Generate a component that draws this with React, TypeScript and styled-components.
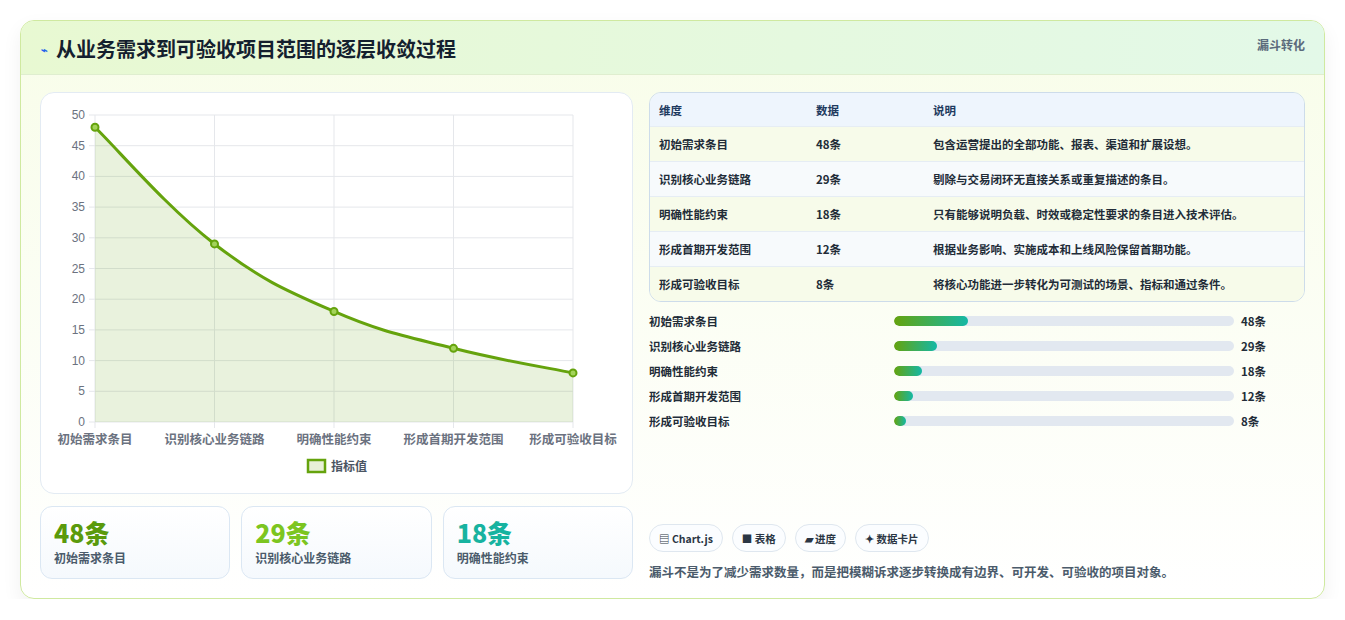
import React from "react";
import styled, { createGlobalStyle } from "styled-components";

const G = createGlobalStyle`
  body { margin: 0; background: #fff; font-family: "Noto Sans CJK SC", "Noto Sans", sans-serif; }
`;
const Page = styled.div` padding: 20px 20px 0 20px; `;
const Card = styled.div`
  border: 1px solid #cfe9a0; border-radius: 14px; overflow: hidden; height: 579px; box-sizing: border-box;
  background: linear-gradient(180deg, #f8fde9 0%, #ffffff 100%);
  box-shadow: 0 8px 20px rgba(0,0,0,0.06);
`;
const Header = styled.div`
  height: 54px; display: flex; justify-content: space-between; align-items: flex-start; padding: 0 19px 0 20px;
  background: linear-gradient(90deg, #e8f9d2, #e3f9e8); border-bottom: 1px solid #dfeecf; box-sizing: border-box;
`;
const Title = styled.h1`
  margin: 13px 0 0; font-size: 20px; font-weight: 700; color: #14202e; display: flex; align-items: center; gap: 8px;
`;
const Tag = styled.span` margin-top: 15px; font-size: 12px; font-weight: 700; color: #5b6b7c; `;
const Body = styled.div`
  display: grid; grid-template-columns: 593px 656px; gap: 16px; padding: 17px 18px 0 19px;
`;
const Left = styled.div` display: flex; flex-direction: column; gap: 12px; `;
const ChartCard = styled.div`
  height: 402px; border: 1px solid #e3ebf3; border-radius: 14px; background: #fff; box-sizing: border-box;
`;
const Stats = styled.div` display: grid; grid-template-columns: repeat(3, 1fr); gap: 11px; `;
const Stat = styled.div`
  height: 73px; border: 1px solid #dbe7f3; border-radius: 12px; padding: 10px 13px; box-sizing: border-box;
  background: linear-gradient(180deg, #fff, #f5f9fd);
`;
const StatNum = styled.div<{ c: string }>` font-size: 25px; font-weight: 800; color: ${p => p.c}; line-height: 30px; `;
const StatLbl = styled.div` font-size: 12px; color: #4b5b6b; font-weight: 600; margin-top: 2px; `;
const Right = styled.div` display: flex; flex-direction: column; `;
const Table = styled.div` border: 1px solid #cddcea; border-radius: 12px; overflow: hidden; height: 208px; `;
const Row = styled.div<{ bg: string; head?: boolean }>`
  display: grid; grid-template-columns: 157px 117px 1fr; padding-left: 9px; height: ${p => p.head ? 33 : 35}px;
  align-items: center; background: ${p => p.bg}; font-size: 11.5px; font-weight: ${p => p.head ? 700 : 600};
  color: ${p => p.head ? "#1e3a5f" : "#222c38"}; border-top: ${p => p.head ? "none" : "1px solid #e6edf4"};
  box-sizing: border-box;
`;
const Bars = styled.div` display: flex; flex-direction: column; gap: 7px; margin-top: 10px; `;
const BarRow = styled.div`
  display: grid; grid-template-columns: 238px 340px 1fr; column-gap: 7px; align-items: center; height: 18px;
  font-size: 11.5px; font-weight: 600; color: #222c38;
`;
const Track = styled.div` height: 10px; border-radius: 5px; background: #e2e8f0; overflow: hidden; `;
const Fill = styled.div` height: 100%; border-radius: 5px; background: linear-gradient(90deg, #65a30d, #14b8a6); `;
const Chips = styled.div` display: flex; gap: 9px; margin-top: 94px; `;
const Chip = styled.span`
  height: 28px; padding: 0 9px; border: 1px solid #dfe7ef; border-radius: 14px; display: inline-flex; align-items: center;
  font-size: 10.5px; font-weight: 700; color: #2b3644; background: #fbfdff; box-sizing: border-box;
`;
const Foot = styled.p` margin: 10px 0 0; font-size: 12.5px; color: #4b5b6b; font-weight: 600; `;

const labels = ["初始需求条目", "识别核心业务链路", "明确性能约束", "形成首期开发范围", "形成可验收目标"];
const vals = [48, 29, 18, 12, 8];
const descs = [
  "包含运营提出的全部功能、报表、渠道和扩展设想。",
  "剔除与交易闭环无直接关系或重复描述的条目。",
  "只有能够说明负载、时效或稳定性要求的条目进入技术评估。",
  "根据业务影响、实施成本和上线风险保留首期功能。",
  "将核心功能进一步转化为可测试的场景、指标和通过条件。",
];
const widths = [21.7, 12.6, 8.2, 5.6, 3.5];

function Chart() {
  const x0 = 54, x1 = 532, y0 = 22, y1 = 329;
  const xs = labels.map((_, i) => x0 + (i * (x1 - x0)) / 4);
  const y = (v: number) => y1 - (v / 50) * (y1 - y0);
  const pts = vals.map((v, i) => [xs[i], y(v)]);
  let d = `M${pts[0][0]},${pts[0][1]}`;
  for (let i = 0; i < pts.length - 1; i++) {
    const p0 = pts[Math.max(0, i - 1)], p1 = pts[i], p2 = pts[i + 1], p3 = pts[Math.min(pts.length - 1, i + 2)];
    const t = 0.2;
    d += ` C${p1[0] + (p2[0] - p0[0]) * t},${p1[1] + (p2[1] - p0[1]) * t} ${p2[0] - (p3[0] - p1[0]) * t},${p2[1] - (p3[1] - p1[1]) * t} ${p2[0]},${p2[1]}`;
  }
  return (
    <svg width="593" height="402" viewBox="0 0 593 402" style={{ display: "block" }}>
      {Array.from({ length: 11 }, (_, i) => (
        <g key={i}>
          <line x1={x0 - 6} x2={x1} y1={y(i * 5)} y2={y(i * 5)} stroke="#e5e7eb" />
          <text x={x0 - 10} y={y(i * 5) + 4} textAnchor="end" fontSize="12" fill="#6b7280" fontFamily="Liberation Sans, sans-serif">{i * 5}</text>
        </g>
      ))}
      {xs.map((x, i) => (
        <g key={i}>
          <line x1={x} x2={x} y1={y0} y2={y1 + 6} stroke="#e5e7eb" />
          <text x={x} y={351} textAnchor="middle" fontSize="12.5" fill="#6b7280" fontWeight="600">{labels[i]}</text>
        </g>
      ))}
      <path d={`${d} L${x1},${y1} L${x0},${y1} Z`} fill="rgba(101,163,13,0.14)" />
      <path d={d} fill="none" stroke="#65a30d" strokeWidth="3" />
      {pts.map((p, i) => <circle key={i} cx={p[0]} cy={p[1]} r="3.5" fill="#a3d35a" stroke="#65a30d" strokeWidth="2" />)}
      <rect x="267" y="367" width="17" height="12" fill="#e8f0d8" stroke="#65a30d" strokeWidth="2.5" />
      <text x="290" y="378" fontSize="12" fill="#4b5563" fontWeight="600">指标值</text>
    </svg>
  );
}

export default function App() {
  return (
    <Page>
      <G />
      <Card>
        <Header>
          <Title><span style={{ fontSize: 11, color: "#2563eb" }}>⌁</span>从业务需求到可验收项目范围的逐层收敛过程</Title>
          <Tag>漏斗转化</Tag>
        </Header>
        <Body>
          <Left>
            <ChartCard><Chart /></ChartCard>
            <Stats>
              <Stat><StatNum c="#5a9a0c">48条</StatNum><StatLbl>初始需求条目</StatLbl></Stat>
              <Stat><StatNum c="#7cc520">29条</StatNum><StatLbl>识别核心业务链路</StatLbl></Stat>
              <Stat><StatNum c="#17b3a0">18条</StatNum><StatLbl>明确性能约束</StatLbl></Stat>
            </Stats>
          </Left>
          <Right>
            <Table>
              <Row head bg="#eef5fd"><span>维度</span><span>数据</span><span>说明</span></Row>
              {labels.map((l, i) => (
                <Row key={l} bg={i % 2 ? "#f7fafc" : "#f7fbea"}><span>{l}</span><span>{vals[i]}条</span><span>{descs[i]}</span></Row>
              ))}
            </Table>
            <Bars>
              {labels.map((l, i) => (
                <BarRow key={l}><span>{l}</span><Track><Fill style={{ width: `${widths[i]}%` }} /></Track><span>{vals[i]}条</span></BarRow>
              ))}
            </Bars>
            <Chips>
              <Chip>▤ Chart.js</Chip><Chip>■ 表格</Chip><Chip>▰ 进度</Chip><Chip>✦ 数据卡片</Chip>
            </Chips>
            <Foot>漏斗不是为了减少需求数量，而是把模糊诉求逐步转换成有边界、可开发、可验收的项目对象。</Foot>
          </Right>
        </Body>
      </Card>
    </Page>
  );
}
